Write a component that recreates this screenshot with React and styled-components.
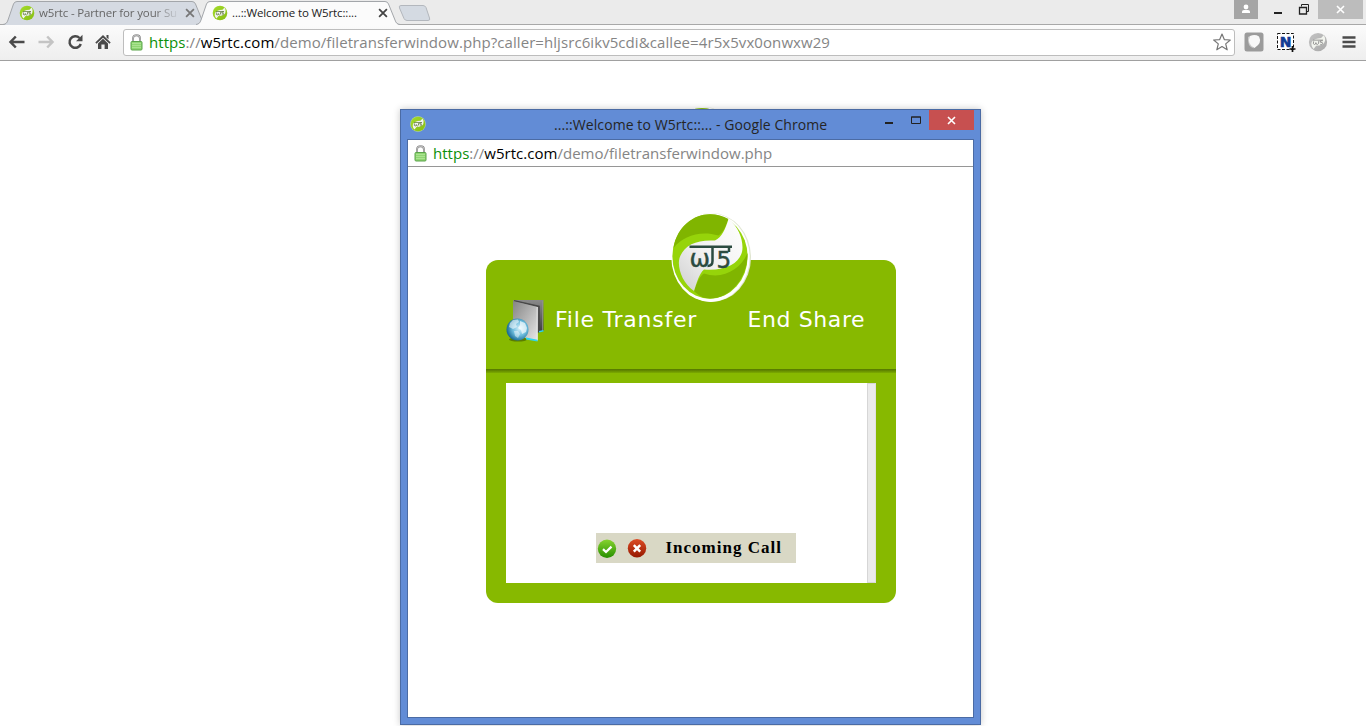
import React from "react";
import styled, { createGlobalStyle } from "styled-components";

const GlobalStyle = createGlobalStyle`
  * { box-sizing: border-box; }
  body { margin: 0; background: #fff; overflow: hidden; }
  svg { display: block; flex: none; }
`;

const ui = `"Open Sans", "Noto Sans", sans-serif`;

const Screen = styled.div`
  position: relative;
  width: 1366px;
  height: 726px;
  display: flex;
  flex-direction: column;
  background: #fff;
  overflow: hidden;
  font-family: ${ui};
`;

const TabStrip = styled.div`
  display: flex;
  align-items: flex-start;
  height: 24px;
  background: #ebebeb;
  padding-left: 3px;
`;

const Tab = styled.div`
  position: relative;
  z-index: ${(p) => (p.$active ? 2 : 1)};
  display: flex;
  align-items: center;
  width: 206px;
  height: 25px;
  padding: 0 13px 0 16px;
  margin-right: -13px;
`;

const TabShape = styled.svg`
  position: absolute;
  inset: 0;
  z-index: -1;
`;

const TabTitle = styled.span`
  width: 141px;
  margin-left: 4px;
  margin-right: 5px;
  overflow: hidden;
  white-space: nowrap;
  font-size: 11.5px;
  line-height: 24px;
  letter-spacing: ${(p) => p.$spacing};
  color: ${(p) => (p.$active ? "#222" : "#666")};
  ${(p) => p.$fade && "mask-image: linear-gradient(90deg, #000 115px, transparent 141px);"}
`;

const NewTab = styled.svg`
  margin: 5px 0 0 9px;
`;

const WindowButtons = styled.div`
  display: flex;
  margin-left: auto;
  margin-right: 3px;
  height: 19px;
`;

const WindowButton = styled.div`
  display: flex;
  align-items: center;
  justify-content: center;
  width: ${(p) => p.$w}px;
  height: 19px;
  background: ${(p) => p.$bg || "transparent"};
`;

const Toolbar = styled.div`
  display: flex;
  align-items: center;
  height: 37px;
  padding: 1px 8px 2px 8px;
  border-top: 1px solid #a8a8a8;
  border-bottom: 1px solid #a0a0a0;
  background: linear-gradient(#fbfbfb, #eeeeee);
`;

const NavIcons = styled.div`
  display: flex;
  align-items: center;
  gap: 11px;
  width: 115px;
`;

const Omnibox = styled.div`
  display: flex;
  align-items: center;
  width: 1112px;
  height: 27px;
  padding: 0 3px 0 6px;
  border: 1px solid #bdbdbd;
  border-radius: 3px;
  background: #fff;
`;

const Url = styled.div`
  flex: 1;
  margin-left: 6px;
  white-space: nowrap;
  font-size: 15px;
  line-height: 24px;
  letter-spacing: ${(p) => p.$spacing};
  color: #858585;
`;
const Secure = styled.span`
  color: #0b900b;
`;
const Host = styled.span`
  color: #000;
`;

const Extensions = styled.div`
  display: flex;
  align-items: center;
  gap: 12px;
  margin-left: 9px;
`;

const Page = styled.main`
  flex: 1;
  display: flex;
  justify-content: center;
  padding: 46px 0 0 40px;
`;

const Popup = styled.section`
  position: absolute;
  left: 400px;
  top: 109px;
  width: 581px;
  height: 616px;
  display: flex;
  flex-direction: column;
  padding: 0 6px 6px;
  border: 1px solid #4b6ba4;
  background: #628cd6;
  box-shadow: 0 0 7px rgba(0, 0, 0, 0.22);
`;

const TitleBar = styled.header`
  display: flex;
  height: 29px;
  padding-left: 3px;
`;

const TitleIcon = styled.div`
  width: 17px;
  padding-top: 6px;
`;

const TitleText = styled.div`
  width: 440px;
  padding-left: 127px;
  white-space: nowrap;
  color: #252525;
  font-size: 14px;
  line-height: 29px;
  letter-spacing: ${(p) => p.$spacing};
`;

const PopupButtons = styled.div`
  display: flex;
  align-items: flex-start;
  margin-left: auto;
`;

const PopupButton = styled.div`
  display: flex;
  align-items: center;
  justify-content: center;
  width: ${(p) => p.$w}px;
  height: 20px;
  background: ${(p) => p.$bg || "transparent"};
`;

const PopupBody = styled.div`
  flex: 1;
  display: flex;
  flex-direction: column;
  border: 1px solid #4b6ba4;
  background: #fff;
`;

const PopupAddress = styled.div`
  display: flex;
  align-items: center;
  height: 27px;
  padding-left: 6px;
  border-bottom: 1px solid #969696;
`;

const Content = styled.div`
  display: flex;
  justify-content: center;
  padding-top: 93px;
`;

const Card = styled.div`
  position: relative;
  width: 410px;
  height: 343px;
  border-radius: 12px;
  background: #87b900;
`;

const CardLogo = styled.div`
  position: absolute;
  left: 185px;
  top: -47px;
`;

const CardHeader = styled.div`
  display: flex;
  height: 109px;
  padding: 40px 0 0 20px;
  color: #fff;
  font-family: "DejaVu Sans", sans-serif;
  font-size: 22px;
  line-height: 40px;
  white-space: nowrap;
`;

const HeaderLabel = styled.span`
  width: ${(p) => p.$w}px;
  padding-left: ${(p) => p.$pad}px;
  letter-spacing: ${(p) => p.$spacing};
`;

const Divider = styled.div`
  height: 4px;
  background: linear-gradient(#567a00, #5e8200 30%, #7cab00);
`;

const Panel = styled.div`
  display: flex;
  align-items: flex-end;
  justify-content: space-between;
  width: 370px;
  height: 200px;
  margin: 10px 20px 0;
  padding-left: 90px;
  background: #fff;
`;

const ScrollTrack = styled.div`
  width: 9px;
  height: 200px;
  border: 1px solid #d6d6d6;
  border-right-color: #e0e0e0;
  background: #ebebeb;
`;

const CallNotice = styled.div`
  display: flex;
  align-items: center;
  width: 200px;
  height: 30px;
  margin-bottom: 20px;
  padding-left: 1px;
  background: #d9d8c5;
`;

const CallText = styled.strong`
  margin-left: 19px;
  color: #000;
  font-family: "Liberation Serif", serif;
  font-size: 17px;
  line-height: 20px;
  letter-spacing: ${(p) => p.$spacing};
  white-space: nowrap;
`;

function Logo({ id, w, h, plain }) {
  const dark = "#80b500";
  const ink = "#2b4b40";
  return (
    <svg width={w} height={h} viewBox="0 0 80 90" preserveAspectRatio="none">
      <defs>
        <linearGradient id={id} x1="0" y1="1" x2="1" y2="0">
          <stop offset="0" stopColor="#cfcfcf" />
          <stop offset=".45" stopColor="#f1f1f1" />
          <stop offset="1" stopColor="#fff" />
        </linearGradient>
      </defs>
      <ellipse cx="40.5" cy="44.5" rx="39.5" ry="44.5" fill="#dfe5d0" />
      <ellipse cx="39.500" cy="44.500" rx="39.200" ry="44.400" fill="#fff" />
      <ellipse cx="39" cy="43.500" rx="37.600" ry="42.200" fill="#96d40a" />
      <path d="M2.500 35C6 14 22 1.300 39 1.300C46 1.300 52 3 57.500 6C55 13 52 20 47.500 22.500C29 17 12 23 2.500 35Z" fill={dark} />
      <path d="M23 78C26 69 29 63 33 60.500C52 67 70 56 76.500 40C77 64 60 85.500 39 85.500C32 85.500 27 82 23 78Z" fill={dark} />
      <path d="M57.500 6C69 15 73 30 71 39C68 50 56 58 33 56.500C28 61 26 69 23 78C11 70 6 54 8.500 45C13 32 25 26.500 44 27.500C51 24 54 17 57.500 6Z" fill={`url(#${id})`} />
      {!plain && (
        <g fill={ink} stroke={ink}>
          <path d="M18.500 33.800H61M41.500 34V48Q41.500 53 36.500 53M58 34V39" fill="none" strokeWidth="2.500" />
          <text x="18.500" y="54" fontFamily="DejaVu Sans, sans-serif" fontSize="24.500" strokeWidth=".4">ω</text>
          <text x="45.500" y="54.500" fontFamily="DejaVu Sans, sans-serif" fontSize="23" strokeWidth=".5">5</text>
        </g>
      )}
    </svg>
  );
}

/* Favicon: the same mark simplified for 16 to 20 pixels */
function SmallLogo({ id, w, h, grey, rim }) {
  const dark = grey ? "#a9a9a9" : "#86bd12";
  const ink = grey ? "#8a8a8a" : "#55702f";
  return (
    <svg width={w} height={h} viewBox="0 0 16 16" preserveAspectRatio="none">
      <defs>
        <linearGradient id={id} x1="0" y1="0" x2="1" y2="1">
          <stop offset="0" stopColor={grey ? "#c4c4c4" : "#a5dc2c"} />
          <stop offset="1" stopColor={dark} />
        </linearGradient>
      </defs>
      <circle cx="8" cy="8" r="7.800" fill={rim ? "#b9d99a" : "none"} />
      <circle cx="8" cy="8" r="7.300" fill={`url(#${id})`} />
      <path d="M12.500 2.500Q14.500 5 13.300 8Q12 11 6.500 11L4.500 13.500Q2 11 3 8Q4.500 5 10.500 4.700Z" fill="#f2f4ee" />
      <path d="M4 6.500H12M4.500 7.500Q3.700 10 5.200 10Q6.300 10 6.300 8.500Q6.300 10 7.500 10Q8.700 10 8.700 7M11.700 7H9.900V8.200Q12 8 11.700 9.300Q11.300 10.300 9.800 9.900" fill="none" stroke={ink} strokeWidth=".7" />
    </svg>
  );
}

const Lock = () => (
  <svg width="13" height="17" viewBox="0 0 13 17">
    <path d="M3 8V4.500C3 2.300 4.500 1.200 6.500 1.200S10 2.300 10 4.500V8" fill="none" stroke="#858585" strokeWidth="2" />
    <path d="M3 8V4.500C3 2.300 4.500 1.200 6.500 1.200S10 2.300 10 4.500V8" fill="none" stroke="#e0e0e0" strokeWidth=".7" />
    <rect x="1" y="7.500" width="11" height="8.500" rx="1" fill="#8fd673" stroke="#5aa34a" />
    <path d="M2 9.500H11M2 11.500H11M2 13.500H11" stroke="#abe391" />
  </svg>
);

const Cross = ({ color, size, width = 1.6 }) => (
  <svg width={size} height={size} viewBox="0 0 9 9">
    <path d="M1 1L8 8M8 1L1 8" stroke={color} strokeWidth={width} />
  </svg>
);

const TabBackground = ({ active }) => (
  <TabShape width="206" height="25" viewBox="0 0 206 25">
    <path
      d="M0 25C3 24.500 4 23 5 20L10.500 4Q11.500 1.500 14 1.500H189Q191.500 1.500 192.500 4L199 20C200 23 201 24.500 204 25Z"
      fill={active ? "#fbfbfb" : "#d5dae2"}
    />
    <path
      d="M0 24.500C3 24 4 23 5 20L10.500 4Q11.500 1.500 14 1.500H189Q191.500 1.500 192.500 4L199 20C200 23 201 24 204 24.500"
      fill="none"
      stroke="#a3a6aa"
    />
  </TabShape>
);

const Back = ({ color, flip }) => (
  <svg width="18" height="16" viewBox="0 0 18 16">
    <path
      d="M2.500 8H16.500M7.800 2.500L2.500 8L7.800 13.500"
      transform={flip ? "translate(18 0) scale(-1 1)" : undefined}
      fill="none"
      stroke={color}
      strokeWidth="2.500"
    />
  </svg>
);

const FolderGlobe = () => (
  <svg width="40" height="44" viewBox="0 0 40 44">
    <defs>
      <linearGradient id="folderBack" x1="0" y1="0" x2="0" y2="1">
        <stop offset="0" stopColor="#8a8a8a" />
        <stop offset="1" stopColor="#3c3c3c" />
      </linearGradient>
      <linearGradient id="folderFront" x1="0" y1="0" x2="1" y2="1">
        <stop offset="0" stopColor="#858585" />
        <stop offset=".5" stopColor="#b5b5b5" />
        <stop offset="1" stopColor="#e8e8e8" />
      </linearGradient>
      <radialGradient id="globe" cx=".6" cy=".45" r=".65">
        <stop offset="0" stopColor="#d8f1fb" />
        <stop offset=".5" stopColor="#6dbcdc" />
        <stop offset="1" stopColor="#075885" />
      </radialGradient>
    </defs>
    <ellipse cx="12" cy="39.500" rx="9" ry="2" fill="#5b7d00" />
    <path d="M7 0H37.500V31L31 33Z" fill="url(#folderBack)" />
    <path d="M8 .8L33 6.500V31" fill="none" stroke="#484848" strokeWidth="1.600" />
    <path d="M36.500 1V31" stroke="#8f8f8f" strokeWidth=".8" />
    <path d="M7 1L31.500 7V41L20 38L7 33Z" fill="url(#folderFront)" />
    <path d="M31.200 7V40" stroke="#ececec" />
    <path d="M20 37.500L31.500 39.700V41.500L20 39.500ZM33 31L37.500 30V31.500L33 32.500Z" fill="#2ed6ee" />
    <circle cx="11.500" cy="29.500" r="11" fill="url(#globe)" />
    <g fill="#fff">
      <path d="M4 23L7 20L12 19.500L13 22L10 24L11 27L7 29L3 27Z" opacity=".55" />
      <path d="M14 21L19 23L21 28L20 32L16 34L15 30L12 28L14 25Z" opacity=".65" />
      <path d="M8 31L12 31L14 34L12 38L9 36Z" opacity=".45" />
    </g>
  </svg>
);

const Accept = () => (
  <svg width="20" height="20" viewBox="0 0 20 20">
    <defs>
      <linearGradient id="accept" x1="0" y1="0" x2="0" y2="1">
        <stop offset="0" stopColor="#87d32f" />
        <stop offset="1" stopColor="#278f00" />
      </linearGradient>
    </defs>
    <circle cx="10" cy="10.700" r="9.200" fill="url(#accept)" />
    <path d="M6 11.200L9 14L14.500 8.700" fill="none" stroke="#fff" strokeWidth="2.300" />
  </svg>
);

const RejectSvg = styled.svg`
  margin-left: 10px;
`;

const Reject = () => (
  <RejectSvg width="20" height="20" viewBox="0 0 20 20">
    <defs>
      <linearGradient id="reject" x1="0" y1="0" x2="0" y2="1">
        <stop offset="0" stopColor="#dc4c25" />
        <stop offset="1" stopColor="#951800" />
      </linearGradient>
    </defs>
    <circle cx="10" cy="10.300" r="9.200" fill="url(#reject)" />
    <path d="M6.800 7.200L13.200 13.600M13.200 7.200L6.800 13.600" stroke="#fff" strokeWidth="2.500" />
  </RejectSvg>
);

export default function App() {
  return (
    <Screen>
      <GlobalStyle />
      <TabStrip>
        <Tab>
          <TabBackground />
          <SmallLogo id="fav1" w={16} h={16} />
          <TabTitle $fade $spacing="-0.15px">w5rtc - Partner for your Su</TabTitle>
          <Cross color="#777" size={10} />
        </Tab>
        <Tab $active>
          <TabBackground active />
          <SmallLogo id="fav2" w={16} h={16} />
          <TabTitle $active $spacing="-0.13px">...::Welcome to W5rtc::...</TabTitle>
          <Cross color="#444" size={10} />
        </Tab>
        <NewTab width="34" height="17" viewBox="0 0 34 17">
          <path d="M3 .5H25Q27 .5 28 2.500L31.500 13Q32.500 15.500 30 15.500H9Q7 15.500 6 13.500L1.500 3Q.5 .5 3 .5Z" fill="#d4dae2" stroke="#b3b7bd" />
        </NewTab>
        <WindowButtons>
          <WindowButton $w={24} $bg="#a5a5a5">
            <svg width="10" height="11" viewBox="0 0 10 11" fill="#fff">
              <circle cx="5" cy="3" r="2.400" />
              <path d="M1 9V7.500Q1 6 3 6H7Q9 6 9 7.500V9Z" />
            </svg>
          </WindowButton>
          <WindowButton $w={39}>
            <svg width="8" height="8" viewBox="0 0 8 8"><path d="M0 7H8" stroke="#222" strokeWidth="2" /></svg>
          </WindowButton>
          <WindowButton $w={21}>
            <svg width="21" height="11" viewBox="0 0 21 11" fill="none" stroke="#222">
              <path d="M4.500 2.500V.5H11.500V7.500H9.500" />
              <path d="M2.500 3.500H9.500V10H2.500ZM2 3.500H10" strokeWidth="1.300" />
            </svg>
          </WindowButton>
          <WindowButton $w={45} $bg="#bcbcbc"><Cross color="#fff" size={9} /></WindowButton>
        </WindowButtons>
      </TabStrip>
      <Toolbar>
        <NavIcons>
          <Back color="#4a4a4a" />
          <Back color="#c4c4c4" flip />
          <svg width="18" height="18" viewBox="0 0 18 18">
            <path d="M13.500 5A5.800 5.800 0 1 0 14.800 11" fill="none" stroke="#4a4a4a" strokeWidth="2.500" />
            <path d="M16.500 1.800V8.300H10Z" fill="#4a4a4a" />
          </svg>
          <svg width="16" height="18" viewBox="0 0 16 18" fill="#4a4a4a">
            <path d="M8 2L15.700 9.500L14.500 10.800L8 4.700L1.500 10.800L.3 9.500ZM11.500 2H13.500V6.200L11.500 4.500Z" />
            <path d="M8 5.800L13 10.500V16H9.600V11.500H6.400V16H3V10.500Z" />
          </svg>
        </NavIcons>
        <Omnibox>
          <Lock />
          <Url $spacing="0.075px">
            <Secure>https</Secure>://<Host>w5rtc.com</Host>/demo/filetransferwindow.php?caller=hljsrc6ikv5cdi&amp;callee=4r5x5vx0onwxw29
          </Url>
          <svg width="18" height="18" viewBox="0 0 18 18">
            <path d="M9 1L11.300 6.600L17.300 7L12.700 10.900L14.200 16.800L9 13.500L3.800 16.800L5.300 10.900L.7 7L6.700 6.600Z" fill="#fff" stroke="#767676" strokeWidth="1.200" strokeLinejoin="round" />
          </svg>
        </Omnibox>
        <Extensions>
          <svg width="20" height="20" viewBox="0 0 20 20">
            <rect x=".5" y=".5" width="19" height="19" rx="2.500" fill="#9b9b9b" />
            <path d="M4 5Q3 15 10 16.500Q6.500 13 6 4Z" fill="#c9c9c9" />
            <path d="M6 4Q11 2 15 4.500Q18.500 11 10.500 16Q2.500 12 6 4Z" fill="#f8f8f8" />
          </svg>
          <svg width="20" height="20" viewBox="0 0 20 20">
            <rect x="1.500" y="1.500" width="16" height="16" fill="#fff" stroke="#111" strokeDasharray="3 1.500" />
            <text x="9.500" y="14.500" textAnchor="middle" fontFamily="DejaVu Sans, sans-serif" fontWeight="bold" fontSize="14" fill="#123c93" stroke="#123c93" strokeWidth=".6">N</text>
            <path d="M16.500 14V20M13.500 17H19.500" stroke="#111" strokeWidth="1.700" />
          </svg>
          <SmallLogo id="extLogo" w={20} h={20} grey />
          <svg width="16" height="14" viewBox="0 0 16 14">
            <path d="M2.500 2.500H15.500M2.500 7H15.500M2.500 11.500H15.500" stroke="#4b4b4b" strokeWidth="2.600" />
          </svg>
        </Extensions>
      </Toolbar>
      <Page>
        <Logo id="pageLogo" w={80} h={90} plain />
      </Page>
      <Popup>
        <TitleBar>
          <TitleIcon><SmallLogo id="titleLogo" w={16} h={16} rim /></TitleIcon>
          <TitleText $spacing="0.08px">...::Welcome to W5rtc::... - Google Chrome</TitleText>
          <PopupButtons>
            <PopupButton $w={27}>
              <svg width="8" height="8" viewBox="0 0 8 8"><path d="M0 7H8" stroke="#222" strokeWidth="2" /></svg>
            </PopupButton>
            <PopupButton $w={27}>
              <svg width="10" height="8" viewBox="0 0 10 8"><path d="M.5 1H9.500V7.500H.5ZM0 1H10" fill="none" stroke="#222" /></svg>
            </PopupButton>
            <PopupButton $w={45} $bg="#c75050"><Cross color="#fff" size={9} /></PopupButton>
          </PopupButtons>
        </TitleBar>
        <PopupBody>
          <PopupAddress>
            <Lock />
            <Url $spacing="0.02px">
              <Secure>https</Secure>://<Host>w5rtc.com</Host>/demo/filetransferwindow.php
            </Url>
          </PopupAddress>
          <Content>
            <Card>
              <CardLogo><Logo id="cardLogo" w={80} h={90} /></CardLogo>
              <CardHeader>
                <FolderGlobe />
                <HeaderLabel $w={192} $pad={9.5} $spacing="0.75px">File Transfer</HeaderLabel>
                <HeaderLabel $w={130} $pad={10} $spacing="0.6px">End Share</HeaderLabel>
              </CardHeader>
              <Divider />
              <Panel>
                <CallNotice>
                  <Accept />
                  <Reject />
                  <CallText $spacing="1px">Incoming Call</CallText>
                </CallNotice>
                <ScrollTrack />
              </Panel>
            </Card>
          </Content>
        </PopupBody>
      </Popup>
    </Screen>
  );
}
